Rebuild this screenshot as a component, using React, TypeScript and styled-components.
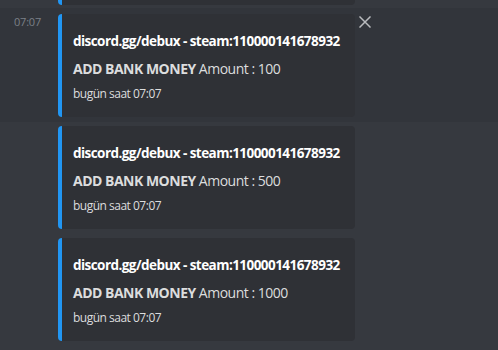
import { FC } from 'react';
import styled, { createGlobalStyle } from 'styled-components';

const GlobalStyle = createGlobalStyle`
  html, body {
    margin: 0;
    padding: 0;
    background: #36393f;
  }
  body {
    font-family: "Open Sans", "Noto Sans", sans-serif;
    -webkit-font-smoothing: antialiased;
  }
`;

const Page = styled.div`
  width: 498px;
  height: 350px;
  overflow: hidden;
  background: #36393f;
`;

const TailRow = styled.div`
  height: 8px;
  padding-left: 58px;
`;

const EmbedTail = styled.div`
  width: 293px;
  height: 5px;
  background: #2f3136;
  border-left: 4px solid #2196f3;
  border-radius: 0 0 4px 4px;
`;

const MessageRow = styled.div<{ $hovered?: boolean }>`
  display: flex;
  align-items: flex-start;
  padding: ${p => (p.$hovered ? '6px 0 5px' : '4px 0 5px')};
  background: ${p => (p.$hovered ? '#32353b' : 'transparent')};
`;

const Gutter = styled.div`
  width: 58px;
  flex-shrink: 0;
  padding-left: 14px;
  box-sizing: border-box;
`;

const Timestamp = styled.span`
  display: block;
  font-size: 11px;
  line-height: 16px;
  color: #7c8087;
  letter-spacing: -0.2px;
`;

const Embed = styled.div`
  width: 282px;
  box-sizing: content-box;
  padding: 16px 0 15px 11px;
  background: #2f3136;
  border-left: 4px solid #2196f3;
  border-radius: 4px;
  display: flex;
  flex-direction: column;
  gap: 8px;
`;

const EmbedTitle = styled.div`
  font-size: 13.5px;
  line-height: 22px;
  font-weight: 700;
  color: #ffffff;
  letter-spacing: -0.55px;
  white-space: nowrap;
`;

const EmbedDescription = styled.div`
  font-size: 14px;
  line-height: 18px;
  color: #dcddde;
  letter-spacing: -0.5px;
  white-space: nowrap;

  strong {
    font-weight: 700;
  }
`;

const EmbedFooter = styled.div`
  font-size: 12px;
  line-height: 16px;
  color: #dcddde;
  letter-spacing: -0.5px;
`;

const CloseButton = styled.button`
  background: none;
  border: none;
  padding: 0;
  margin: 2px 0 0 4px;
  width: 12px;
  height: 12px;
  display: flex;
  cursor: pointer;
`;

interface Entry {
  amount: number;
}

const entries: Entry[] = [{ amount: 100 }, { amount: 500 }, { amount: 1000 }];

const BankEmbed: FC<Entry> = ({ amount }) => (
  <Embed>
    <EmbedTitle>discord.gg/debux - steam:110000141678932</EmbedTitle>
    <EmbedDescription>
      <strong>ADD BANK MONEY</strong> Amount : {amount}
    </EmbedDescription>
    <EmbedFooter>bugün saat 07:07</EmbedFooter>
  </Embed>
);

export default function App() {
  return (
    <Page>
      <GlobalStyle />
      <TailRow>
        <EmbedTail />
      </TailRow>
      {entries.map((entry, i) => (
        <MessageRow key={entry.amount} $hovered={i === 0}>
          <Gutter>{i === 0 && <Timestamp>07:07</Timestamp>}</Gutter>
          <BankEmbed amount={entry.amount} />
          {i === 0 && (
            <CloseButton aria-label="Remove embed">
              <svg width="12" height="12" viewBox="0 0 12 12">
                <path d="M1 1L11 11M11 1L1 11" stroke="#b9bbbe" strokeWidth="1.5" strokeLinecap="square" />
              </svg>
            </CloseButton>
          )}
        </MessageRow>
      ))}
    </Page>
  );
}
